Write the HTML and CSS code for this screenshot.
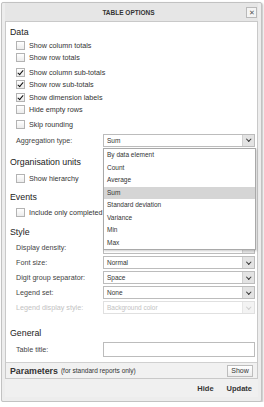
FILE: index.html
```html
<!DOCTYPE html>
<html lang="en">
<head>
  <meta charset="UTF-8">
  <title>Table options</title>
  <link rel="stylesheet" href="styles.css">
</head>
<body>

  <div class="window">
    <!-- Title bar -->
    <div class="header">
      <span class="title">TABLE OPTIONS</span>
      <span class="close">&#x2715;</span>
    </div>

    <div class="panel">
      <div class="content">
        <div class="heading">Data</div>
        <div class="group">
          <label class="check"><span class="box"></span>Show column totals</label>
          <label class="check"><span class="box"></span>Show row totals</label>
        </div>
        <div class="group gap3">
          <label class="check"><span class="box on"></span>Show column sub-totals</label>
          <label class="check"><span class="box on"></span>Show row sub-totals</label>
        </div>
        <div class="group gap1">
          <label class="check"><span class="box on"></span>Show dimension labels</label>
          <label class="check"><span class="box"></span>Hide empty rows</label>
        </div>
        <div class="group gap3">
          <label class="check"><span class="box"></span>Skip rounding</label>
        </div>
        <div class="field agg">
          <span class="label">Aggregation type:</span>
          <div class="select"><span class="value">Sum</span><span class="arrow"></span></div>
        </div>

        <div class="heading org">Organisation units</div>
        <label class="check first"><span class="box"></span>Show hierarchy</label>

        <div class="heading events">Events</div>
        <label class="check include"><span class="box"></span>Include only completed</label>

        <div class="heading style">Style</div>
        <div class="fields">
          <div class="field">
            <span class="label">Display density:</span>
            <div class="select"><span class="value"></span><span class="arrow"></span></div>
          </div>
          <div class="field">
            <span class="label">Font size:</span>
            <div class="select"><span class="value">Normal</span><span class="arrow"></span></div>
          </div>
          <div class="field">
            <span class="label">Digit group separator:</span>
            <div class="select"><span class="value">Space</span><span class="arrow"></span></div>
          </div>
          <div class="field">
            <span class="label">Legend set:</span>
            <div class="select"><span class="value">None</span><span class="arrow"></span></div>
          </div>
          <div class="field disabled">
            <span class="label">Legend display style:</span>
            <div class="select"><span class="value">Background color</span><span class="arrow"></span></div>
          </div>
        </div>

        <div class="heading general">General</div>
        <div class="field title-field">
          <span class="label">Table title:</span>
          <div class="input"></div>
        </div>
      </div>

      <div class="params">
        <span class="params-title">Parameters</span>
        <span class="params-note">(for standard reports only)</span>
        <span class="btn">Show</span>
      </div>
    </div>

    <div class="footer">
      <span class="link">Hide</span>
      <span class="link">Update</span>
    </div>

    <!-- Open aggregation type list -->
    <div class="dropdown">
      <div class="item">By data element</div>
      <div class="item">Count</div>
      <div class="item">Average</div>
      <div class="item selected">Sum</div>
      <div class="item">Standard deviation</div>
      <div class="item">Variance</div>
      <div class="item">Min</div>
      <div class="item">Max</div>
    </div>
  </div>

</body>
</html>
```

FILE: styles.css
```css
body {
  margin: 0;
  background: #fff;
  font-family: 'Liberation Sans', Arial, sans-serif;
  font-size: 7.2px;
  color: #333;
}

.window {
  position: relative;
  margin: 2px 0 0 1px;
  width: 261px;
  height: 400px;
  box-sizing: border-box;
  border: 1px solid #c2c2c2;
  border-radius: 2px;
  background: #ededed;
  box-shadow: 1px 1px 2px rgba(0, 0, 0, 0.25);
  padding: 0 3px 4px;
  display: flex;
  flex-direction: column;
}

.header {
  height: 18px;
  display: flex;
  align-items: center;
  background: #e6e6e6;
}

.title {
  flex: 1;
  text-align: center;
  font-weight: bold;
  font-size: 6.5px;
  color: #333;
  padding-left: 6px;
}

.close {
  width: 9px;
  height: 9px;
  line-height: 9px;
  border: 1px solid #b9b9b9;
  background: #f4f4f4;
  text-align: center;
  font-size: 7px;
  color: #555;
  margin-right: 1px;
}

.panel {
  flex: 1;
  background: #fff;
  border: 1px solid #c9c9c9;
  display: flex;
  flex-direction: column;
}

.content {
  flex: 1;
  padding: 3px 2px 0 4px;
}

.heading {
  height: 14px;
  line-height: 14px;
  font-size: 8.8px;
  color: #222;
}

.heading.org { margin-top: 8px; }
.heading.events { margin-top: 6px; }
.heading.style { margin-top: 7px; }
.heading.general { margin-top: 11px; }

.group.gap3 { margin-top: 3px; }
.group.gap1 { margin-top: 1px; }

.check {
  display: flex;
  align-items: center;
  height: 12px;
  padding-left: 6px;
  white-space: nowrap;
}

.check.first { margin-top: 3px; }
.check.include { margin-top: 2px; }

.box {
  flex: none;
  width: 7px;
  height: 7px;
  border: 1px solid #b3b3b3;
  background: linear-gradient(#fff, #ececec);
  margin-right: 4px;
  position: relative;
}

.box.on::after {
  content: '';
  position: absolute;
  left: 2px;
  top: 0;
  width: 2px;
  height: 5px;
  border: solid #111;
  border-width: 0 1.5px 1.5px 0;
  transform: rotate(40deg);
}

.fields {
  margin-top: 1px;
}

.field {
  display: flex;
  align-items: center;
  height: 15px;
  padding-left: 6px;
}

.field.agg {
  margin-top: 3px;
  height: 14px;
}

.label {
  width: 87px;
  color: #444;
}

.select, .input {
  flex: 1;
  height: 11px;
  border: 1px solid #bcbcbc;
  background: #fff;
  display: flex;
  align-items: center;
}

.value {
  flex: 1;
  padding-left: 3px;
  font-size: 6.5px;
}

.arrow {
  width: 11px;
  height: 11px;
  background: #e3e3e3;
  border-left: 1px solid #cfcfcf;
  position: relative;
}

.arrow::after {
  content: '';
  position: absolute;
  left: 3.5px;
  top: 2.5px;
  width: 2.5px;
  height: 2.5px;
  border: solid #333;
  border-width: 0 1.2px 1.2px 0;
  transform: rotate(45deg);
}

.field.disabled .label,
.field.disabled .value {
  color: #c2c2c2;
}

.field.disabled .select {
  border-color: #e0e0e0;
}

.field.disabled .arrow {
  background: #f3f3f3;
  border-left-color: #e6e6e6;
}

.field.disabled .arrow::after {
  border-color: #ccc;
}

.title-field {
  margin-top: 2px;
  height: 14px;
}

.input {
  height: 13px;
  flex: none;
  width: 150px;
}

.params {
  height: 15px;
  display: flex;
  align-items: center;
  padding: 0 4px 0 4px;
  background: #f1f1f1;
  border-top: 1px solid #d0d0d0;
}

.params-title {
  font-weight: bold;
  font-size: 8.8px;
  color: #333;
  margin-right: 3px;
}

.params-note {
  flex: 1;
  font-size: 6.5px;
}

.btn {
  width: 24px;
  height: 10px;
  line-height: 10px;
  text-align: center;
  border: 1px solid #bdbdbd;
  background: linear-gradient(#fff, #ececec);
  font-size: 7px;
}

.footer {
  height: 18px;
  display: flex;
  align-items: center;
  justify-content: flex-end;
  gap: 13px;
  padding-right: 6px;
  background: #f0f0f0;
}

.link {
  font-weight: bold;
  font-size: 7.5px;
  color: #333;
}

.dropdown {
  position: absolute;
  left: 101px;
  top: 145px;
  width: 151px;
  border: 1px solid #a9a9a9;
  background: #fff;
  box-shadow: 1px 1px 2px rgba(0, 0, 0, 0.2);
}

.item {
  height: 12.5px;
  line-height: 12.5px;
  padding-left: 3px;
  font-size: 6.5px;
  color: #333;
}

.item.selected {
  background: #d5d5d5;
}
```
